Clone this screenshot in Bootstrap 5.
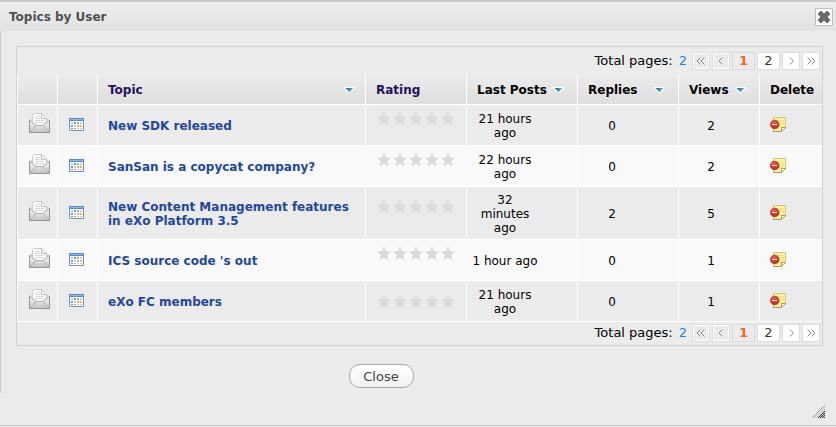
<!DOCTYPE html>
<html lang="en">
<head>
<meta charset="utf-8">
<meta name="viewport" content="width=device-width, initial-scale=1">
<title>Topics by User</title>
<link rel="stylesheet" href="https://cdn.jsdelivr.net/npm/bootstrap@5.3.0/dist/css/bootstrap.min.css">
<style>
  body { font: 13px/14px "DejaVu Sans", Verdana, sans-serif; color: #000; background: #ebebeb; }
  a { text-decoration: none; }
  .popup { border-top: 2px solid #c9c9c9; border-bottom: 1px solid #c8c8c8; min-height: 426px; }
  .popup-title { height: 29px; padding: 0 3px 0 9px; background: linear-gradient(#ededed, #e2e2e2); }
  .popup-title h1 { font-size: 12px; line-height: 16px; color: #505050; }
  .popup-close { width: 18px; height: 18px; background: #fff; border: 1px solid #bdbdbd; border-radius: 1px; }
  .popup-body { padding: 15px 13px 0 15px; border-left: 1px solid #c8c8c8; min-height: 362px; }
  .topic-box { border: 1px solid #ced0da; }
  .pager { font-size: 13px; gap: 2px; padding: 2px 2px 3px; }
  .pager-top { padding-top: 5px; padding-bottom: 4px; }
  .pager-label { line-height: 16px; }
  .pager-total { color: #1a86e8; margin: 0 3px 0 4px; }
  .pg { width: 18px; height: 18px; line-height: 16px; border: 1px solid #dcdcdc; background: #fff; color: #333; font-size: 13px; }
  .pg-off { background: #ebebeb; box-shadow: inset 0 0 0 1px #fff; }
  .pg-num { width: 23px; }
  .pg-on { background: #ebebeb; color: #f26a0c; font-weight: bold; }
  .topics { table-layout: fixed; border-collapse: separate; border-spacing: 0; border-left: 1px solid #fff; font-size: 12px; }
  .topics th, .topics td { border-bottom: 1px solid #fff; border-right: 1px solid #fff; padding: 2px 10px 0; vertical-align: middle; }
  .topics th:last-child, .topics td:last-child { border-right: 0; }
  .topics th { height: 31px; background: linear-gradient(#ececec, #dedede); white-space: nowrap; }
  .topics td { height: 41px; }
  .topics tbody tr:nth-child(even) { background: #f9f9f9; }
  .topics th a { color: #000; }
  .topics th .sort-main, .topics .th-rating { color: #26105e; }
  .c-icon { width: 40px; } .c-rating { width: 101px; } .c-last { width: 111px; }
  .c-replies { width: 101px; } .c-views { width: 81px; } .c-delete { width: 62px; }
  .topics .topic-link { color: #1f479f; font-weight: bold; }
  .topics td.when { padding: 6px 34px 4px 0; text-align: center; white-space: nowrap; }
  .topics td.replies { padding-right: 42px; text-align: center; }
  .topics td.views { padding-right: 26px; text-align: center; }
  .topics td.icons { padding: 0 0 4px 4px; text-align: center; }
  .topics td.kind { padding: 0 2px 0 0; }
  .topics td.stars { padding: 0 0 14px 10px; }
  .topics tbody tr:last-child td.stars { padding-bottom: 0; }
  .topics td.del-cell { padding-top: 0; }
  .gap-rr { padding-right: 3px; }
  svg { display: block; }
  .icons svg, .kind svg { margin: 0 auto; }
  .close-row { padding-top: 18px; padding-right: 77px; }
  .btn-round { width: 65px; height: 24px; border: 1px solid #a9a9a9; border-radius: 11px; background: linear-gradient(#fff, #f1f1f1); color: #444; font-size: 13px; line-height: 16px; }
  .btn-round { padding: 2px 0 0; }
  .grip-row { padding: 12px 11px 0 0; }
</style>
<script src="https://cdn.jsdelivr.net/npm/bootstrap@5.3.0/dist/js/bootstrap.bundle.min.js"></script>
</head>
<body>
<svg width="0" height="0" class="position-absolute" aria-hidden="true">
  <defs>
    <linearGradient id="gEnv" x1="0" y1="0" x2="0" y2="1"><stop offset="0" stop-color="#f6f6f6"/><stop offset="1" stop-color="#c4c4c4"/></linearGradient>
    <linearGradient id="gArrow" x1="0" y1="0" x2="1" y2="0"><stop offset="0" stop-color="#1c5f8c"/><stop offset="1" stop-color="#55bfe8"/></linearGradient>
    <radialGradient id="gRed" cx=".4" cy=".3" r=".8"><stop offset="0" stop-color="#f0644a"/><stop offset="1" stop-color="#c41408"/></radialGradient>
    <symbol id="mail" viewBox="0 0 21 21">
      <path d="M.5 7.500 4 6.500h13l3.500 1V19.500H.5z" fill="#ececec" stroke="#b4b4b4"/>
      <path d="M3.500 13V2L5 .5H13L17.500 5v8l-4 2h-6z" fill="#fbfbfb" stroke="#cacaca"/>
      <path d="M12.500.5V5.500h5" fill="#eee" stroke="#c4c4c4"/>
      <path d="M6 3.500h5M6 5.500h5M6 7.500h9M6 9.500h9" stroke="#d8d8d8"/>
      <path d="M1 8 7.500 12.500h6L20 8V19H1z" fill="url(#gEnv)"/>
      <path d="M1 8 7.500 12.500h6L20 8M1 18.500l6.500-6M20 18.500l-6.500-6" fill="none" stroke="#b0b0b0"/>
      <path d="M.5 7.500V19.500h20V7.500" fill="none" stroke="#999"/>
    </symbol>
    <symbol id="cal" viewBox="0 0 15 14">
      <path d="M.5.5h14v12H.5z" fill="#fff" stroke="#6f90c8"/>
      <path d="M0 0h15v3H0z" fill="#5c8bcd"/><path d="M1 1h13v1H1z" fill="#8fb5e8"/>
      <path d="M2 4h2v2H2zM11 4h2v2h-2zM5 7h2v2H5zM8 10h2v1H8zM11 10h2v1h-2z" fill="#ccc"/>
      <path d="M5 4h2v2H5zM2 7h2v2H2z" fill="#56a5e6"/><path d="M8 4h2v2H8zM5 10h2v1H5z" fill="#8cc97c"/>
      <path d="M8 7h2v2H8z" fill="#f5a26a"/><path d="M11 7h2v2h-2z" fill="#f0b84c"/><path d="M2 10h2v1H2z" fill="#f06a60"/>
    </symbol>
    <symbol id="stars5" viewBox="0 0 80 15">
      <path id="oneStar" d="M8 0 9.900 5.200 15.500 5.500 11.200 9 12.700 14.500 8 11.400 3.300 14.500 4.800 9 .5 5.500 6.100 5.200z" fill="#dadada"/>
      <use href="#oneStar" x="16"/><use href="#oneStar" x="32"/><use href="#oneStar" x="48"/><use href="#oneStar" x="64"/>
    </symbol>
    <symbol id="del" viewBox="0 0 17 16">
      <path d="M3.500.5h12v10l-4 4h-8z" fill="#fdf897" stroke="#cfc08a"/>
      <path d="M6 3.500h8M6 5.500h8M7 7.500h7M8 9.500h5" stroke="#ece183"/>
      <path d="M3 14.500h8.500l4-4" fill="none" stroke="#b99b55"/>
      <path d="M11.500 14.500v-4h4z" fill="#fff" stroke="#b99b55"/>
      <circle cx="4.700" cy="7.500" r="4.400" fill="url(#gRed)" stroke="#b8382c" stroke-width=".6"/>
      <path d="M2 7h5v1H2z" fill="#fff"/>
    </symbol>
    <symbol id="sort" viewBox="0 0 11 6">
      <path d="M0 0h11v1.500L5.500 6 0 1.500z" fill="#fff"/>
      <path d="M1.500 1h8l-4 4z" fill="url(#gArrow)"/>
    </symbol>
    <symbol id="one" viewBox="0 0 16 16"><path d="M9.500 4.500 6 8l3.500 3.500" fill="none" stroke="#8a8a8a"/></symbol>
    <symbol id="two" viewBox="0 0 16 16"><path d="M7.500 4.500 4 8l3.500 3.500M11.500 4.500 8 8l3.500 3.500" fill="none" stroke="#8a8a8a"/></symbol>
    <symbol id="oneR" viewBox="0 0 16 16"><path d="M7 4.500 10.500 8 7 11.500" fill="none" stroke="#8a8a8a"/></symbol>
    <symbol id="twoR" viewBox="0 0 16 16"><path d="M4.500 4.500 8 8l-3.500 3.500M8.500 4.500 12 8l-3.500 3.500" fill="none" stroke="#8a8a8a"/></symbol>
  </defs>
</svg>

<main class="popup">
  <header class="popup-title d-flex align-items-center justify-content-between">
    <h1 class="m-0 fw-bold">Topics by User</h1>
    <button type="button" class="popup-close p-0 d-flex align-items-center justify-content-center" aria-label="Close window">
      <svg width="12" height="12" viewBox="0 0 12 12"><path d="M2 0h2v1h1v1h2V1h1V0h2v1h1v1h1v2h-1v1h-1v2h1v1h1v2h-1v1h-1v1H8v-1H7v-1H5v1H4v1H2v-1H1v-1H0V8h1V7h1V5H1V4H0V2h1V1h1z" fill="#6b6b6b"/></svg>
    </button>
  </header>

  <div class="popup-body">
    <div class="topic-box">
      <nav class="pager pager-top d-flex align-items-center justify-content-end" aria-label="Pages, top">
        <span class="pager-label">Total pages:</span><span class="pager-total">2</span>
        <button type="button" class="pg pg-off p-0" disabled aria-label="First page"><svg width="16" height="16"><use href="#two"/></svg></button>
        <button type="button" class="pg pg-off p-0" disabled aria-label="Previous page"><svg width="16" height="16"><use href="#one"/></svg></button>
        <a href="#" class="pg pg-num pg-on text-center" aria-current="page">1</a>
        <a href="#" class="pg pg-num text-center">2</a>
        <button type="button" class="pg p-0" aria-label="Next page"><svg width="16" height="16"><use href="#oneR"/></svg></button>
        <button type="button" class="pg p-0" aria-label="Last page"><svg width="16" height="16"><use href="#twoR"/></svg></button>
      </nav>

      <table class="topics w-100">
        <colgroup><col class="c-icon"><col class="c-icon"><col><col class="c-rating"><col class="c-last"><col class="c-replies"><col class="c-views"><col class="c-delete"></colgroup>
        <thead>
          <tr>
            <th></th><th></th>
            <th><a href="#" class="sort-main d-flex align-items-center justify-content-between">Topic<svg width="11" height="6"><use href="#sort"/></svg></a></th>
            <th class="th-rating">Rating</th>
            <th><a href="#" class="gap-rr d-flex align-items-center justify-content-between">Last Posts<svg width="11" height="6"><use href="#sort"/></svg></a></th>
            <th><a href="#" class="gap-rr d-flex align-items-center justify-content-between">Replies<svg width="11" height="6"><use href="#sort"/></svg></a></th>
            <th><a href="#" class="gap-rr d-flex align-items-center justify-content-between">Views<svg width="11" height="6"><use href="#sort"/></svg></a></th>
            <th>Delete</th>
          </tr>
        </thead>
        <tbody>
          <tr>
            <td class="icons"><svg width="21" height="21"><use href="#mail"/></svg></td>
            <td class="kind"><svg width="15" height="14"><use href="#cal"/></svg></td>
            <td><a href="#" class="topic-link">New SDK released</a></td>
            <td class="stars"><svg width="80" height="15"><use href="#stars5"/></svg></td>
            <td class="when">21 hours<br>ago</td><td class="replies">0</td><td class="views">2</td>
            <td class="del-cell"><a href="#" aria-label="Delete"><svg width="17" height="16"><use href="#del"/></svg></a></td>
          </tr>
          <tr>
            <td class="icons"><svg width="21" height="21"><use href="#mail"/></svg></td>
            <td class="kind"><svg width="15" height="14"><use href="#cal"/></svg></td>
            <td><a href="#" class="topic-link">SanSan is a copycat company?</a></td>
            <td class="stars"><svg width="80" height="15"><use href="#stars5"/></svg></td>
            <td class="when">22 hours<br>ago</td><td class="replies">0</td><td class="views">2</td>
            <td class="del-cell"><a href="#" aria-label="Delete"><svg width="17" height="16"><use href="#del"/></svg></a></td>
          </tr>
          <tr>
            <td class="icons"><svg width="21" height="21"><use href="#mail"/></svg></td>
            <td class="kind"><svg width="15" height="14"><use href="#cal"/></svg></td>
            <td><a href="#" class="topic-link">New Content Management features in eXo Platform 3.5</a></td>
            <td class="stars"><svg width="80" height="15"><use href="#stars5"/></svg></td>
            <td class="when">32<br>minutes<br>ago</td><td class="replies">2</td><td class="views">5</td>
            <td class="del-cell"><a href="#" aria-label="Delete"><svg width="17" height="16"><use href="#del"/></svg></a></td>
          </tr>
          <tr>
            <td class="icons"><svg width="21" height="21"><use href="#mail"/></svg></td>
            <td class="kind"><svg width="15" height="14"><use href="#cal"/></svg></td>
            <td><a href="#" class="topic-link">ICS source code 's out</a></td>
            <td class="stars"><svg width="80" height="15"><use href="#stars5"/></svg></td>
            <td class="when">1 hour ago</td><td class="replies">0</td><td class="views">1</td>
            <td class="del-cell"><a href="#" aria-label="Delete"><svg width="17" height="16"><use href="#del"/></svg></a></td>
          </tr>
          <tr>
            <td class="icons"><svg width="21" height="21"><use href="#mail"/></svg></td>
            <td class="kind"><svg width="15" height="14"><use href="#cal"/></svg></td>
            <td><a href="#" class="topic-link">eXo FC members</a></td>
            <td class="stars"><svg width="80" height="15"><use href="#stars5"/></svg></td>
            <td class="when">21 hours<br>ago</td><td class="replies">0</td><td class="views">1</td>
            <td class="del-cell"><a href="#" aria-label="Delete"><svg width="17" height="16"><use href="#del"/></svg></a></td>
          </tr>
        </tbody>
      </table>

      <nav class="pager d-flex align-items-center justify-content-end" aria-label="Pages, bottom">
        <span class="pager-label">Total pages:</span><span class="pager-total">2</span>
        <button type="button" class="pg pg-off p-0" disabled aria-label="First page"><svg width="16" height="16"><use href="#two"/></svg></button>
        <button type="button" class="pg pg-off p-0" disabled aria-label="Previous page"><svg width="16" height="16"><use href="#one"/></svg></button>
        <a href="#" class="pg pg-num pg-on text-center" aria-current="page">1</a>
        <a href="#" class="pg pg-num text-center">2</a>
        <button type="button" class="pg p-0" aria-label="Next page"><svg width="16" height="16"><use href="#oneR"/></svg></button>
        <button type="button" class="pg p-0" aria-label="Last page"><svg width="16" height="16"><use href="#twoR"/></svg></button>
      </nav>
    </div>
    <div class="close-row d-flex justify-content-center">
      <button type="button" class="btn-round">Close</button>
    </div>
  </div>
  <div class="grip-row d-flex justify-content-end">
    <svg width="13" height="13" viewBox="0 0 13 13" aria-hidden="true">
      <path d="M13 0v13H0z" fill="#d3d5db"/><path d="M0 13 13 0" stroke="#aaacb2"/>
      <path d="M11 7h1v1h-1zM9 9h1v1H9zM11 9h1v1h-1zM7 11h1v1H7zM9 11h1v1H9zM11 11h1v1h-1zM12 6h1v1h-1zM10 8h1v1h-1zM12 8h1v1h-1zM8 10h1v1H8zM10 10h1v1h-1zM12 10h1v1h-1zM6 12h1v1H6zM8 12h1v1H8zM10 12h1v1h-1zM12 12h1v1h-1z" fill="#333"/>
    </svg>
  </div>
</main>
</body>
</html>
